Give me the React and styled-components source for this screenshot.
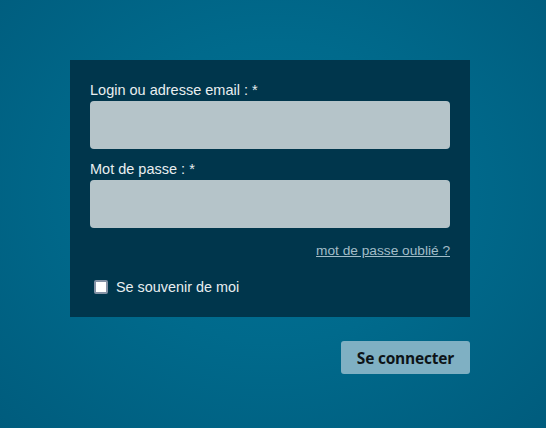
import React from 'react';
import styled, { createGlobalStyle } from 'styled-components';

const GlobalStyle = createGlobalStyle`
  html, body {
    margin: 0;
    height: 100%;
  }
  body {
    background: radial-gradient(ellipse at 50% 45%, #007196 0%, #006a8c 45%, #005c7d 100%);
    font-family: "Liberation Sans", Arial, sans-serif;
  }
`;

const Page = styled.div`
  width: 546px;
  height: 428px;
  box-sizing: border-box;
  padding: 60px 0 0 70px;
`;

const Form = styled.form`
  width: 400px;
  display: flex;
  flex-direction: column;
  align-items: flex-end;
`;

const Panel = styled.div`
  width: 400px;
  box-sizing: border-box;
  background: #00364c;
  padding: 20px;
  display: flex;
  flex-direction: column;
`;

const Label = styled.label`
  color: #e8eef0;
  font-size: 14.5px;
  line-height: 20px;
  margin-top: ${p => p.$first ? '0' : '10px'};
`;

const Input = styled.input`
  display: block;
  box-sizing: border-box;
  width: 360px;
  height: 48px;
  margin-top: 1px;
  border: none;
  border-radius: 4px;
  background: #b5c4c9;
  padding: 0 12px;
  font-size: 15px;
  outline: none;
`;

const Forgot = styled.a`
  align-self: flex-end;
  margin-top: 14px;
  color: #a2bdc8;
  font-size: 13.7px;
  line-height: 18px;
  text-decoration: underline;
  cursor: pointer;
`;

const Remember = styled.label`
  display: flex;
  align-items: center;
  gap: 8px;
  margin-top: 17px;
  padding-left: 4px;
  height: 20px;
  color: #e8eef0;
  font-size: 14.4px;
`;

const Check = styled.span`
  width: 10px;
  height: 10px;
  background: #fff;
  border: 2px solid #8593a6;
  border-radius: 2px;
`;

const Submit = styled.button`
  margin-top: 24px;
  width: 129px;
  height: 33px;
  border: none;
  border-radius: 3px;
  background: #7fb0c3;
  color: #0d1418;
  font-family: "Open Sans", "DejaVu Sans", sans-serif;
  font-weight: 700;
  font-size: 15.5px;
  letter-spacing: -0.2px;
  cursor: pointer;
`;

export default function App() {
  return (
    <>
      <GlobalStyle />
      <Page>
        <Form onSubmit={e => e.preventDefault()}>
          <Panel>
            <Label $first htmlFor="login">Login ou adresse email : *</Label>
            <Input id="login" type="text" />
            <Label htmlFor="pass">Mot de passe : *</Label>
            <Input id="pass" type="password" />
            <Forgot>mot de passe oublié ?</Forgot>
            <Remember>
              <Check />
              Se souvenir de moi
            </Remember>
          </Panel>
          <Submit type="submit">Se connecter</Submit>
        </Form>
      </Page>
    </>
  );
}
